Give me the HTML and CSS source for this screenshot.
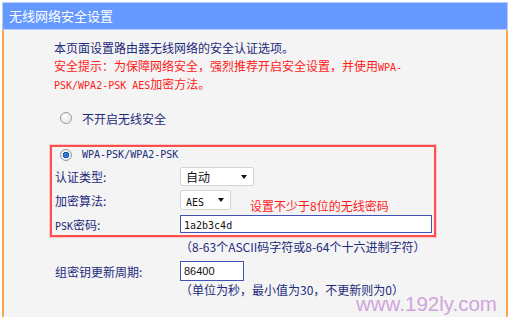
FILE: index.html
```html
<!DOCTYPE html>
<html lang="zh-CN">
<head>
    <meta charset="UTF-8">
    <title>无线网络安全设置</title>
    <link rel="stylesheet" href="styles.css">
</head>
<body>
    <div class="panel">
        <div class="panel-title">无线网络安全设置</div>
        <div class="panel-body">
            <p class="intro">本页面设置路由器无线网络的安全认证选项。</p>
            <p class="tip">安全提示：为保障网络安全，强烈推荐开启安全设置，并使用<span class="mono">WPA-</span><br><span class="mono">PSK/WPA2-PSK AES</span>加密方法。</p>

            <div class="radio-row">
                <span class="radio"></span>
                <span>不开启无线安全</span>
            </div>

            <div class="wpa-box">
                <div class="radio-row first">
                    <span class="radio checked"></span>
                    <span class="mono">WPA-PSK/WPA2-PSK</span>
                </div>
                <div class="form-row">
                    <span class="label">认证类型:</span>
                    <div class="select select-auth">自动<i class="arrow"></i></div>
                </div>
                <div class="form-row">
                    <span class="label">加密算法:</span>
                    <div class="select select-aes"><span class="mono">AES</span><i class="arrow"></i></div>
                </div>
                <div class="form-row">
                    <span class="label"><span class="mono">PSK</span>密码:</span>
                    <div class="input input-psk"><span class="mono">1a2b3c4d</span></div>
                </div>
                <span class="note">设置不少于8位的无线密码</span>
            </div>

            <div class="hint">（8-63个ASCII码字符或8-64个十六进制字符）</div>

            <div class="form-row">
                <span class="label">组密钥更新周期:</span>
                <div class="input input-period">86400</div>
            </div>

            <div class="hint">（单位为秒，最小值为30，不更新则为0）</div>

            <span class="watermark">www.192ly.com</span>
        </div>
    </div>
</body>
</html>
```

FILE: styles.css
```css
body {
    margin: 0;
    background: #ffffff;
    font-family: "Noto Sans CJK SC", "Liberation Sans", sans-serif;
    font-size: 12px;
    color: #1e2a7c;
}
p {
    margin: 0;
}
.mono {
    font-family: "DejaVu Sans Mono", "Liberation Mono", monospace;
    font-size: 10px;
    line-height: 1;
}
.panel {
    margin: 2px 2px 0 2px;
}
.panel-title {
    height: 26px;
    line-height: 26px;
    padding-left: 6px;
    background: #6699ff;
    border: 1px solid #b8ccff;
    color: #ffffff;
    font-size: 13px;
}
.panel-body {
    position: relative;
    height: 287px;
    padding: 9px 0 0 48px;
    background: #f4f4f4;
    border-left: 2px solid #ffa34d;
    border-right: 2px solid #ffa34d;
    box-sizing: border-box;
    overflow: hidden;
}
.intro, .tip {
    line-height: 18px;
    padding-left: 2px;
}
.tip {
    color: #ff1a1a;
}
.radio-row {
    display: flex;
    align-items: center;
    height: 20px;
    margin-top: 15px;
    padding-left: 8px;
    gap: 10px;
}
.radio-row.first {
    height: 15px;
    margin-top: 0;
    padding-left: 5px;
}
.radio {
    width: 10px;
    height: 10px;
    border-radius: 50%;
    border: 1px solid #9a9a9a;
    background: radial-gradient(circle at 40% 35%, #ffffff, #dcdcdc);
    box-shadow: inset 0 0 0 1px #f0f0f0;
}
.radio.checked {
    background: radial-gradient(circle, #1f5fb8 0, #3b8ee8 2px, #0c3f8a 3px, #eef2f8 3.5px, #d8dde4);
}
.wpa-box {
    position: relative;
    width: 386px;
    margin: 17px 0 0 -2px;
    padding: 0 0 1px 3px;
    border: 2px solid #ff5050;
    box-shadow: 0 0 0 1px #ffc8c8;
    box-sizing: border-box;
}
.form-row {
    display: flex;
    align-items: center;
    height: 20px;
    margin-top: 4px;
}
.wpa-box .form-row:nth-child(2) {
    margin-top: 4px;
}
.label {
    width: 125px;
    flex: none;
}
.select {
    position: relative;
    height: 18px;
    line-height: 18px;
    padding-left: 5px;
    background: #ffffff;
    border: 1px solid #d4d4d4;
    border-radius: 2px;
    box-sizing: border-box;
    color: #111111;
}
.select-auth {
    width: 74px;
    height: 19px;
}
.select-aes {
    width: 51px;
    height: 20px;
    line-height: 19px;
}
.arrow {
    position: absolute;
    right: 6px;
    top: 7px;
    border-left: 3.5px solid transparent;
    border-right: 3.5px solid transparent;
    border-top: 4px solid #111111;
}
.input {
    height: 18px;
    line-height: 16px;
    padding-left: 3px;
    background: #ffffff;
    border: 1px solid #4052b5;
    box-sizing: border-box;
    color: #111111;
}
.input-psk {
    width: 252px;
}
.input-period {
    width: 64px;
    height: 20px;
    line-height: 18px;
    font-family: "Liberation Sans", sans-serif;
    font-size: 11px;
}
.note {
    position: absolute;
    left: 198px;
    top: 52px;
    color: #ff1a1a;
    font-size: 12px;
    line-height: 14px;
}
.hint {
    margin-top: 1px;
    padding-left: 128px;
    line-height: 18px;
}
.panel-body > .form-row {
    margin-top: 5px;
    padding-left: 3px;
}
.panel-body > .hint:last-of-type {
    margin-top: 0;
}
.watermark {
    position: absolute;
    left: 352px;
    top: 262px;
    font-family: "Liberation Sans", sans-serif;
    font-size: 20.5px;
    color: #cfa5dc;
}
```
